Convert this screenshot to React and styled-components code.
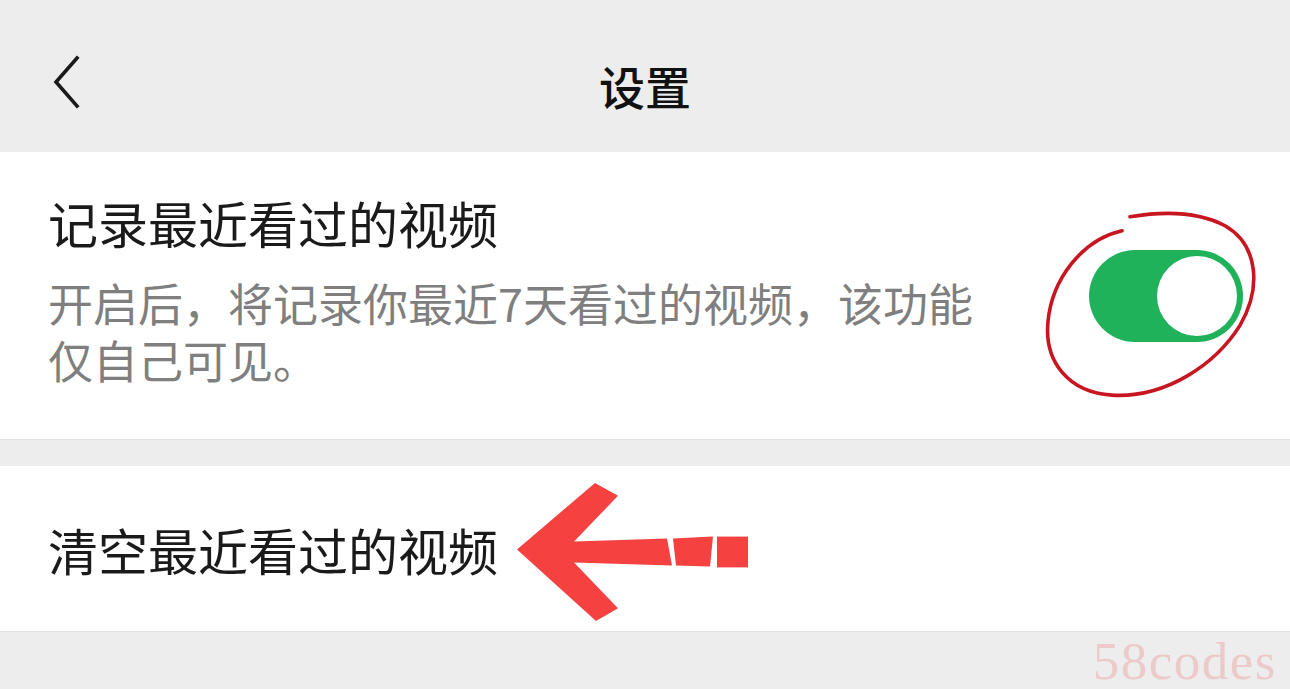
import React from "react";
import styled, { createGlobalStyle } from "styled-components";

const GlobalStyle = createGlobalStyle`
  html, body {
    margin: 0;
    padding: 0;
    background: #ededed;
  }
  body {
    font-family: "Noto Sans CJK SC", "Noto Sans", sans-serif;
  }
`;

const Page = styled.div`
  width: 1290px;
  height: 689px;
  display: flex;
  flex-direction: column;
  background: #ededed;
  overflow: hidden;
`;

const Header = styled.header`
  height: 152px;
  flex-shrink: 0;
  box-sizing: border-box;
  padding-top: 12px;
  display: grid;
  grid-template-columns: 1fr auto 1fr;
  align-items: center;
  background: #ededed;
`;

const BackButton = styled.button`
  justify-self: start;
  margin-left: 44px;
  width: 44px;
  height: 60px;
  padding: 0;
  border: none;
  background: none;
  display: flex;
  align-items: center;
  justify-content: center;
`;

const Title = styled.h1`
  margin: 0;
  font-size: 46px;
  font-weight: 500;
  color: #111;
  line-height: 1;
  padding-top: 6px;
`;

const Card = styled.section`
  position: relative;
  flex-shrink: 0;
  height: ${(p) => p.$height}px;
  box-sizing: border-box;
  background: #fff;
  border-bottom: 1px solid #e2e2e2;
  display: flex;
  align-items: center;
  padding: 0 47px 0 48px;
  margin-top: ${(p) => p.$gap || 0}px;
`;

const TextCol = styled.div`
  width: 950px;
  display: flex;
  flex-direction: column;
  gap: 22px;
  padding-bottom: 12px;
`;

const ItemTitle = styled.div`
  font-size: 50px;
  line-height: 60px;
  color: #1a1a1a;
`;

const ItemDesc = styled.div`
  font-size: 45px;
  line-height: 57px;
  color: #7f7f7f;
`;

const Switch = styled.div`
  margin-left: auto;
  width: 154px;
  height: 92px;
  border-radius: 46px;
  background: #1fb25b;
  display: flex;
  align-items: center;
  justify-content: flex-end;
  padding-right: 6px;
  box-sizing: border-box;
`;

const Knob = styled.div`
  width: 80px;
  height: 80px;
  border-radius: 50%;
  background: #fff;
`;

const Overlay = styled.svg`
  position: absolute;
  inset: 0;
  width: 100%;
  height: 100%;
  pointer-events: none;
`;

const Footer = styled.footer`
  flex: 1;
  display: flex;
  justify-content: flex-end;
  align-items: center;
  padding-right: 13px;
`;

const Watermark = styled.span`
  font-family: "Liberation Serif", serif;
  font-size: 53px;
  letter-spacing: 1.5px;
  color: rgba(236, 150, 150, 0.4);
  line-height: 1;
  margin-top: 2px;
`;

function BackIcon() {
  return (
    <svg width="34" height="54" viewBox="0 0 34 54">
      <polyline
        points="28,3 7,27 28,51"
        fill="none"
        stroke="#1a1a1a"
        strokeWidth="3.6"
        strokeLinecap="square"
        strokeLinejoin="miter"
      />
    </svg>
  );
}

function CircleMark() {
  return (
    <Overlay viewBox="0 152 1290 288" preserveAspectRatio="none">
      <path
        d="M1122 231 C1082 240 1052 280 1048 322 C1044 362 1068 393 1112 396 C1165 399 1215 366 1240 326 C1262 288 1258 245 1225 226 C1195 210 1160 212 1130 217"
        fill="none"
        stroke="#c81620"
        strokeWidth="3.6"
        strokeLinecap="round"
      />
    </Overlay>
  );
}

function ArrowMark() {
  return (
    <Overlay viewBox="0 466 1290 166" preserveAspectRatio="none">
      <g fill="#f5413f">
        <polygon points="517,550 595,483 618,496 574,542 667,539 672,566 574,563 618,609 596,622" />
        <polygon points="673,539 713,537 710,567 676,566" />
        <polygon points="717,537 748,537 748,568 717,568" />
      </g>
    </Overlay>
  );
}

export default function App() {
  return (
    <>
      <GlobalStyle />
      <Page>
        <Header>
          <BackButton aria-label="返回">
            <BackIcon />
          </BackButton>
          <Title>设置</Title>
          <span />
        </Header>

        <Card $height={288}>
          <TextCol>
            <ItemTitle>记录最近看过的视频</ItemTitle>
            <ItemDesc>开启后，将记录你最近7天看过的视频，该功能仅自己可见。</ItemDesc>
          </TextCol>
          <Switch>
            <Knob />
          </Switch>
          <CircleMark />
        </Card>

        <Card $height={166} $gap={26}>
          <ItemTitle>清空最近看过的视频</ItemTitle>
          <ArrowMark />
        </Card>

        <Footer>
          <Watermark>58codes</Watermark>
        </Footer>
      </Page>
    </>
  );
}
